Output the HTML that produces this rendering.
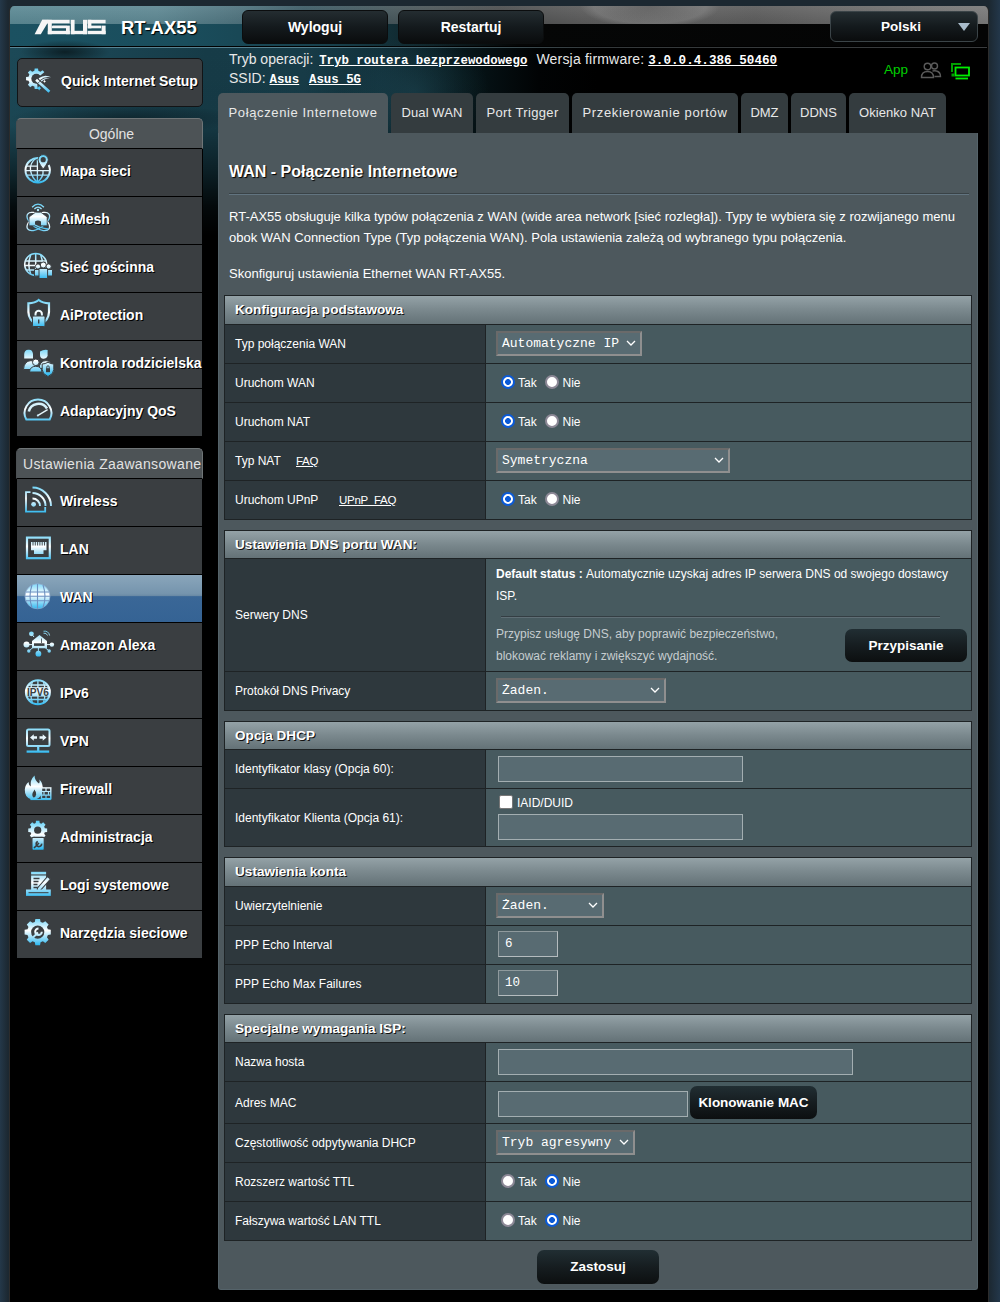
<!DOCTYPE html>
<html><head><meta charset="utf-8"><style>
*{box-sizing:border-box;}
html,body{margin:0;padding:0;}
body{width:1000px;height:1302px;overflow:hidden;background:linear-gradient(90deg,#243849 0px,#1c2831 8px,#1c2831 989px,#23374a 1000px);font-family:"Liberation Sans",sans-serif;position:relative;}
.abs{position:absolute;}
#main{position:absolute;left:9px;top:6px;width:980px;height:1296px;background:#000;border-radius:5px 5px 0 0;overflow:hidden;border-left:1px solid #2c2c2c;border-right:1px solid #2c2c2c;}
#hdrtop{position:absolute;left:0;top:0;width:980px;height:18px;background:linear-gradient(90deg,#5b8994 0%,#5e8893 15%,#4d717c 24%,#3b5a64 30%,#4a5558 42%,#4b4d4e 50%,#5a5a5a 58%,#626262 66%,#5c5c5c 76%,#6e6e6e 90%,#7a7a7a 100%);}
#hdrtop2{position:absolute;left:0;top:0;width:979px;height:18px;background:linear-gradient(180deg,rgba(255,255,255,0.08),rgba(0,0,0,0.05));}
#hdrmid{position:absolute;left:0;top:18px;width:979px;height:22px;background:linear-gradient(90deg,#1b5161 0%,#1a4d5c 18%,#173f4b 33%,#0e2227 43%,#050606 52%,#040404 100%);}
#hdrline{position:absolute;left:0;top:40px;width:977px;height:1px;background:#000;}
#hdrline2{position:absolute;left:0;top:41px;width:977px;height:1px;background:linear-gradient(90deg,#5a8696 0%,#54808f 30%,#3f5a63 45%,#34393b 60%,#3a3c3e 100%);}
#hdrbot{position:absolute;left:0;top:42px;width:979px;height:220px;background:linear-gradient(90deg,#1c4957 0%,#1a4452 10%,#163b47 20%,#173c48 30%,#11303a 38%,#07171b 46%,#010304 54%,#000 60%);}
#hdrbot2{position:absolute;left:0;top:42px;width:979px;height:220px;background:linear-gradient(180deg,rgba(0,0,0,0) 0%,rgba(0,0,0,0.05) 35%,rgba(0,0,0,0.45) 55%,rgba(0,0,0,0.85) 72%,#000 85%);}
#blob1{position:absolute;left:10px;top:34px;width:90px;height:24px;border-radius:50%;background:radial-gradient(ellipse at center,rgba(0,0,0,0.55),rgba(0,0,0,0) 70%);}
#blob2{position:absolute;left:0px;top:98px;width:230px;height:30px;border-radius:50%;background:radial-gradient(ellipse at center,rgba(0,0,0,0.4),rgba(0,0,0,0) 72%);}
#blob3{position:absolute;left:330px;top:30px;width:150px;height:110px;border-radius:50%;background:radial-gradient(ellipse at center,rgba(40,90,105,0.35),rgba(0,0,0,0) 70%);}
#blob4{position:absolute;left:570px;top:0px;width:140px;height:18px;background:radial-gradient(ellipse 70px 22px at 50% 0%,rgba(0,0,0,0.05) 0%,rgba(255,255,255,0.12) 80%,rgba(255,255,255,0) 100%);}
.btn{position:absolute;border-radius:6px;background:linear-gradient(180deg,#242d31 0%,#141a1d 50%,#0a0c0d 100%);color:#fff;font-weight:bold;text-align:center;border:1px solid #0b0d0e;}
.sb{position:absolute;left:17px;width:186px;}
.qis{top:58px;height:49px;background:#3a3e41;border:1px solid #121416;border-radius:5px;}
.sbt{position:absolute;left:43px;top:0;line-height:44px;color:#fff;font-weight:bold;font-size:14px;text-shadow:1px 1px 0 #000;white-space:nowrap;}
.grp{white-space:nowrap;overflow:hidden;height:31px;left:16px !important;width:187px !important;background:#4d5356;border-radius:5px 5px 0 0;border-top:1px solid #6f7577;border-right:1px solid #6f7577;border-left:1px solid #4a4f52;color:#e2e2e2;font-size:14px;line-height:30px;text-align:center;border-bottom:1px solid #000;}
.mi{position:absolute;left:17px;width:186px;height:48px;background:#3a3e41;border-bottom:1px solid #000;border-right:1px solid #000;}
.mi.on{background:linear-gradient(180deg,#8aa6bb 0%,#7594ad 40%,#6a8aa5 44%,#3a6797 46%,#356394 100%);}
.mi svg{position:absolute;left:7px;top:5px;}
.mi .t{position:absolute;left:43px;top:0;line-height:45px;color:#fff;font-weight:bold;font-size:14px;text-shadow:1px 1px 0 #000;white-space:nowrap;}
.info{position:absolute;color:#e8e8e8;font-size:14px;white-space:nowrap;}
.mono{font-family:"Liberation Mono",monospace;font-weight:bold;text-decoration:underline;color:#fff;font-size:12.4px;}
.tab{position:absolute;top:93px;height:41px;background:#343c3f;border-radius:5px 5px 0 0;color:#e8e8e8;font-size:13px;text-align:center;line-height:39px;white-space:nowrap;}
.tab.act{background:#4d585d;}
#panel{position:absolute;left:218px;top:133px;width:760px;height:1157px;background:#4d585d;border-radius:0 0 3px 3px;border-left:1px solid #55636a;border-right:1px solid #55636a;border-bottom:1px solid #55636a;}
.ttl{position:absolute;left:229px;top:163px;color:#fff;font-weight:bold;font-size:16px;text-shadow:1px 1px 1px #000;white-space:nowrap;}
.hr{position:absolute;left:229px;top:193px;width:740px;height:2px;border-top:1px solid #394246;border-bottom:1px solid #627480;}
.para{position:absolute;left:229px;color:#fff;font-size:13px;line-height:21px;white-space:nowrap;}
.tb{position:absolute;left:224px;width:748px;border:1px solid #1e2325;background:#475a5f;}
.th{position:relative;background:linear-gradient(180deg,#94a2a7 0%,#7a888d 50%,#647277 100%);border-bottom:1px solid #1e2325;color:#fff;font-weight:bold;font-size:13.6px;padding-left:10px;text-shadow:1px 1px 0 #111;white-space:nowrap;}
.r{position:relative;border-bottom:1px solid #1e2325;}
.r.last{border-bottom:none;}
.r .l{position:absolute;left:0;top:0;bottom:0;width:261px;background:#2e383d;border-right:1px solid #1e2325;color:#fff;font-size:12px;padding-left:10px;display:flex;align-items:center;white-space:nowrap;}
.r .v{position:absolute;left:261px;top:0;bottom:0;right:0;color:#fff;font-size:12px;}
.dd{position:absolute;height:25px;background:#586b72;border-top:2px solid #6a6a6a;border-left:2px solid #6a6a6a;border-bottom:2px solid #8f8f8f;border-right:2px solid #8f8f8f;color:#fff;font-family:"Liberation Mono",monospace;font-size:13px;line-height:21px;padding-left:4px;white-space:nowrap;}
.dd svg{position:absolute;top:7px;}
.inp{position:absolute;height:26px;background:#586b72;border:1px solid #a3aeb1;}
.inp2{position:absolute;height:26px;background:#586b72;border-top:1px solid #8f9a9d;border-left:1px solid #8f9a9d;border-bottom:1px solid #b5bcbf;border-right:1px solid #b5bcbf;color:#fff;font-family:"Liberation Mono",monospace;font-size:12.5px;font-weight:normal;line-height:24px;padding-left:6px;}
.rad{position:absolute;width:14px;height:14px;border-radius:50%;background:#fff;border:2px solid #8c8896;}
.rad.on{border:2px solid #0b5ad7;background:radial-gradient(circle at 50% 50%,#0b5ad7 0,#0b5ad7 2.6px,#fff 3.2px);}
.rl{position:absolute;color:#fff;font-size:12px;}
.dbtn{position:absolute;border-radius:7px;background:linear-gradient(180deg,#212e33 0%,#161d20 50%,#0c0f10 100%);color:#fff;font-weight:bold;text-align:center;font-size:13.5px;}
</style></head><body>
<div id="main"><div id="hdrtop"></div><div id="hdrtop2"></div><div id="hdrmid"></div><div id="hdrline"></div><div id="hdrline2"></div><div id="hdrbot"></div><div id="hdrbot2"></div><div id="blob1"></div><div id="blob2"></div><div id="blob3"></div><div id="blob4"></div></div>
<svg class="abs" style="left:0;top:0" width="120" height="40" viewBox="0 0 120 40"><g fill="#f6f6f6"><path d="M34.6,34.2 L40.8,34.2 L48.2,22 L48.2,19.8 L42.2,19.8Z"/><path d="M42.2,19.8 H69.6 V23.3 H42.2Z"/><path d="M47.8,19.8 H51.8 V34.2 H47.8Z"/><path d="M52.6,25.6 L66.4,25.6 L66.4,28.3 L51.8,28.3 L51.8,26.4Z"/><path d="M66,25.6 H69.8 V34.2 H66Z"/><path d="M47.8,30.8 H69.8 V34.2 H47.8Z"/><path d="M70.8,19.8 H74.6 V34.2 H70.8Z"/><path d="M83,19.8 H87.2 V34.2 H83Z"/><path d="M70.8,30.8 H87.2 V34.2 H70.8Z"/><path d="M87.8,19.8 H105.6 V23.3 H87.8Z"/><path d="M87.8,19.8 H91.4 V28.3 H87.8Z"/><path d="M87.8,25.6 L101.2,25.6 L101.2,28.3 L87.8,28.3Z"/><path d="M101.6,25.6 H105.6 V34.2 H101.6Z"/><path d="M87.8,30.8 H105.6 V34.2 H87.8Z"/></g></svg>
<div class="abs" style="left:121px;top:17px;color:#fff;font-weight:bold;font-size:18.4px;letter-spacing:0px;text-shadow:1px 1px 1px #000;">RT-AX55</div>
<div class="btn" style="left:242px;top:10px;width:146px;height:34px;line-height:32px;font-size:14px;">Wyloguj</div>
<div class="btn" style="left:398px;top:10px;width:146px;height:34px;line-height:32px;font-size:14px;">Restartuj</div>
<div class="btn" style="left:830px;top:11px;width:148px;height:31px;line-height:29px;font-size:13.5px;padding-right:6px;border:1px solid #3b4448;">Polski<svg class="abs" style="left:127px;top:11px" width="12" height="8" viewBox="0 0 12 8"><path d="M0,0 H12 L6,8Z" fill="#a9bccb"/></svg></div>
<div class="info" style="left:229px;top:51px;">Tryb operacji: <span class="mono" style="margin-left:2px">Tryb routera bezprzewodowego</span><span style="margin-left:9px;letter-spacing:0.2px">Wersja firmware:</span> <span class="mono" style="font-size:12.65px">3.0.0.4.386_50460</span></div>
<div class="info" style="left:229px;top:70px;">SSID: <span class="mono">Asus</span>&nbsp; <span class="mono" style="margin-left:2px">Asus_5G</span></div>
<div class="abs" style="left:884px;top:62px;color:#00d000;font-size:13.5px;">App</div>
<svg class="abs" style="left:920px;top:61px" width="22" height="18" viewBox="0 0 22 18"><g fill="none" stroke="#5a5a5a" stroke-width="1.4"><circle cx="7.5" cy="5.5" r="3.3"/><path d="M1.5,16.5 Q1.5,10.5 7.5,10.5 Q13.5,10.5 13.5,16.5Z"/><circle cx="14.5" cy="5" r="3"/><path d="M12.5,10 Q15,9.5 16.5,10 Q20.5,11 20.5,15.5 H14.5"/></g></svg>
<svg class="abs" style="left:950px;top:61px" width="22" height="20" viewBox="0 0 22 20"><path d="M2,11 V3 H11" fill="none" stroke="#00a000" stroke-width="2"/><rect x="5.5" y="6.5" width="13.5" height="8" fill="none" stroke="#00ee00" stroke-width="1.8"/><path d="M5.5,17.5 H18" stroke="#00ee00" stroke-width="1.8"/><rect x="1.5" y="12.5" width="3" height="3" fill="#00a000"/></svg>
<div class="sb qis"><svg width="0" height="0"></svg><div class="abs" style="left:8px;top:8px"><svg width="27" height="27" viewBox="0 0 30 30" overflow="visible"><defs><linearGradient id="igqis" gradientUnits="userSpaceOnUse" x1="0" y1="1" x2="0" y2="29"><stop offset="0" stop-color="#5ccff8"/><stop offset="0.48" stop-color="#ffffff"/><stop offset="1" stop-color="#2db8f0"/></linearGradient></defs><path d="M9.27,4.28 L9.65,1.55 L13.35,1.55 L13.73,4.28 L16.09,5.26 L18.29,3.60 L20.90,6.21 L19.24,8.41 L20.22,10.77 L22.95,11.15 L22.95,14.85 L20.22,15.23 L19.24,17.59 L20.90,19.79 L18.29,22.40 L16.09,20.74 L13.73,21.72 L13.35,24.45 L9.65,24.45 L9.27,21.72 L6.91,20.74 L4.71,22.40 L2.10,19.79 L3.76,17.59 L2.78,15.23 L0.05,14.85 L0.05,11.15 L2.78,10.77 L3.76,8.41 L2.10,6.21 L4.71,3.60 L6.91,5.26Z" fill="url(#igqis)"/><circle cx="11.5" cy="13" r="5.6" fill="#3a3e41"/>
<path d="M11.5,13 L22,4.5 L30,10 L30,30 L14,30Z" fill="#3a3e41"/>
<path d="M14,12.5 Q21,7.5 28,11.5 Q21,9.8 15.2,14.6Z" fill="url(#igqis)"/><path d="M16.2,15 Q21,11.5 26.5,12.5 Q21,12.8 17.2,16.5Z" fill="#cfe9f5"/>
<path d="M11.2,14.2 L26,27.6" stroke="#3a3e41" stroke-width="5"/><path d="M11.2,14.2 L26,27.6" stroke="url(#igqis)" stroke-width="3"/><path d="M13.2,18.2 L15.4,15.8" stroke="#3a3e41" stroke-width="0.9"/>
<path d="M14.6,21.200000000000003 Q15.32,22.880000000000003 17.0,23.6 Q15.32,24.32 14.6,26.0 Q13.879999999999999,24.32 12.2,23.6 Q13.879999999999999,22.880000000000003 14.6,21.200000000000003Z" fill="#4fc8f6"/><path d="M11.6,18.5 Q11.959999999999999,19.34 12.799999999999999,19.7 Q11.959999999999999,20.06 11.6,20.9 Q11.24,20.06 10.4,19.7 Q11.24,19.34 11.6,18.5Z" fill="#bfe8fa"/><path d="M20.6,14.5 Q21.05,15.55 22.1,16 Q21.05,16.45 20.6,17.5 Q20.150000000000002,16.45 19.1,16 Q20.150000000000002,15.55 20.6,14.5Z" fill="#ffffff"/></svg></div><div class="sbt">Quick Internet Setup</div></div>
<div class="sb grp" style="top:118px;padding-left:4px;">Ogólne</div>
<div class="mi" style="top:149px"><svg width="30" height="30" viewBox="0 0 30 30" overflow="visible"><defs><linearGradient id="igmap" gradientUnits="userSpaceOnUse" x1="0" y1="1" x2="0" y2="29"><stop offset="0" stop-color="#5ccff8"/><stop offset="0.48" stop-color="#ffffff"/><stop offset="1" stop-color="#2db8f0"/></linearGradient></defs><path d="M16.6,4.4 A12.2,12.2 0 1 0 24.7,11" fill="none" stroke="url(#igmap)" stroke-width="2"/>
<g fill="none" stroke="url(#igmap)" stroke-width="1.3"><path d="M2.5,12.2 H14 M1.6,16.7 H25.6 M2.5,21.2 H24.8 M13.4,5.5 V28.3 M12,4.3 Q5.5,9 6.5,16.5 Q8,24 13.4,28.3 M19,16 Q20,23 13.4,28.3"/></g>
<path d="M19.2,0.6 a5.1,5.1 0 0 1 5.1,5.1 c0,3.3 -5.1,9.2 -5.1,9.2 c0,0 -5.1,-5.9 -5.1,-9.2 a5.1,5.1 0 0 1 5.1,-5.1Z" fill="url(#igmap)" stroke="#3a3e41" stroke-width="1"/><circle cx="19.2" cy="5.7" r="2.6" fill="#3a3e41"/></svg><div class="t">Mapa sieci</div></div>
<div class="mi" style="top:197px"><svg width="30" height="30" viewBox="0 0 30 30" overflow="visible"><defs><linearGradient id="igaimesh" gradientUnits="userSpaceOnUse" x1="0" y1="1" x2="0" y2="29"><stop offset="0" stop-color="#5ccff8"/><stop offset="0.48" stop-color="#ffffff"/><stop offset="1" stop-color="#2db8f0"/></linearGradient></defs><g fill="none" stroke="url(#igaimesh)" stroke-width="1.3"><ellipse cx="14.3" cy="19.5" rx="13" ry="6.5" transform="rotate(-35 14.3 19.5)"/><ellipse cx="14.3" cy="19.5" rx="13" ry="6.5" transform="rotate(35 14.3 19.5)"/>
<path d="M8.1,5.2 Q14,-1 19.9,5.2 M10.4,7 Q14,3.2 17.6,7"/></g>
<path d="M5,15 L11.5,10.2 L16.8,10.2 L23.2,15 L23.2,23.8 L5,23.8Z" fill="url(#igaimesh)" stroke="#3a3e41" stroke-width="0.8"/><path d="M11,23.8 L11,19.5 Q14,17.5 17,19.5 L17,23.8Z" fill="#3a3e41"/><circle cx="14" cy="8" r="1.2" fill="url(#igaimesh)"/>
<path d="M11,23 Q16,26 24,27" fill="none" stroke="url(#igaimesh)" stroke-width="1.3"/></svg><div class="t">AiMesh</div></div>
<div class="mi" style="top:245px"><svg width="30" height="30" viewBox="0 0 30 30" overflow="visible"><defs><linearGradient id="igguest" gradientUnits="userSpaceOnUse" x1="0" y1="1" x2="0" y2="29"><stop offset="0" stop-color="#5ccff8"/><stop offset="0.48" stop-color="#ffffff"/><stop offset="1" stop-color="#2db8f0"/></linearGradient></defs><g fill="none" stroke="url(#igguest)" stroke-width="1.5"><circle cx="11.7" cy="14.5" r="11"/>
<path d="M1,11 H22.5 M1,15.5 H22.5 M2,20 H21 M11.7,3.5 V25.5 M6.7,5 Q3,14.5 6.7,24 M16.7,5 Q20.4,14.5 16.7,24"/></g>
<g stroke="#3a3e41" stroke-width="1"><circle cx="14" cy="16.5" r="2.6" fill="url(#igguest)"/><circle cx="24.6" cy="16.5" r="2.6" fill="url(#igguest)"/>
<path d="M10.5,19.5 h7 v6.5 h-7Z M21,19.5 h7.5 v6.5 h-7.5Z" fill="url(#igguest)"/>
<circle cx="19.3" cy="15" r="3" fill="url(#igguest)"/><path d="M15,18.5 h8.6 v10 h-8.6Z" fill="url(#igguest)"/></g></svg><div class="t">Sieć gościnna</div></div>
<div class="mi" style="top:293px"><svg width="30" height="30" viewBox="0 0 30 30" overflow="visible"><defs><linearGradient id="igprot" gradientUnits="userSpaceOnUse" x1="0" y1="1" x2="0" y2="29"><stop offset="0" stop-color="#5ccff8"/><stop offset="0.48" stop-color="#ffffff"/><stop offset="1" stop-color="#2db8f0"/></linearGradient></defs><path d="M14.7,2 Q18.5,5 25,5.3 V14 Q25,22.5 14.7,28.5 Q4.4,22.5 4.4,14 V5.3 Q11,5 14.7,2Z" fill="none" stroke="url(#igprot)" stroke-width="2.2"/>
<path d="M11.5,19 V16 a3.2,3.2 0 0 1 6.4,0 V19" fill="none" stroke="url(#igprot)" stroke-width="2"/><rect x="8.5" y="18" width="12.5" height="10.5" rx="1.2" fill="url(#igprot)" stroke="#3a3e41" stroke-width="1"/><rect x="14" y="21.5" width="1.4" height="4" fill="#3a3e41"/></svg><div class="t">AiProtection</div></div>
<div class="mi" style="top:341px"><svg width="30" height="30" viewBox="0 0 30 30" overflow="visible"><defs><linearGradient id="igparent" gradientUnits="userSpaceOnUse" x1="0" y1="1" x2="0" y2="29"><stop offset="0" stop-color="#5ccff8"/><stop offset="0.48" stop-color="#ffffff"/><stop offset="1" stop-color="#2db8f0"/></linearGradient></defs><path d="M4.2,3.8 Q8.5,3.2 9,8 V12.5 H0.2 V8 Q0.5,4 4.2,3.8Z" fill="url(#igparent)"/><path d="M16,5.5 Q20,3 23.6,4 V10 Q22.5,13 19.5,12.8 Q16,12.5 16,9Z" fill="url(#igparent)"/>
<path d="M-0.5,23.5 Q0,15 7,14.6 Q12.5,15 13,23.5Z" fill="url(#igparent)" stroke="#3a3e41" stroke-width="1"/>
<path d="M15,23 Q15.5,14.8 22,14.6 Q27,15 27.5,20Z" fill="url(#igparent)" stroke="#3a3e41" stroke-width="1"/>
<circle cx="11.8" cy="16.3" r="3.3" fill="url(#igparent)" stroke="#3a3e41" stroke-width="1"/><path d="M5.5,26 Q6,20.3 11.8,20.3 Q17.5,20.3 18,26Z" fill="url(#igparent)" stroke="#3a3e41" stroke-width="1"/>
<path d="M24,16.2 Q26.8,18 29.8,18 V23.5 Q29.8,28 24,30.5 Q18.2,28 18.2,23.5 V18 Q21.2,18 24,16.2Z" fill="url(#igparent)" stroke="#3a3e41" stroke-width="1"/><rect x="22" y="22.2" width="4" height="4" fill="#3a3e41"/><path d="M22.8,22.5 V21 a1.2,1.2 0 0 1 2.4,0 V22.5" fill="none" stroke="#3a3e41" stroke-width="0.9"/></svg><div class="t">Kontrola rodzicielska</div></div>
<div class="mi" style="top:389px"><svg width="30" height="30" viewBox="0 0 30 30" overflow="visible"><defs><linearGradient id="igqos" gradientUnits="userSpaceOnUse" x1="0" y1="1" x2="0" y2="29"><stop offset="0" stop-color="#5ccff8"/><stop offset="0.48" stop-color="#ffffff"/><stop offset="1" stop-color="#2db8f0"/></linearGradient></defs><path d="M2.3,25.5 A13.4,13.4 0 1 1 25.7,25.5 Z" fill="none" stroke="url(#igqos)" stroke-width="2"/><path d="M4.8,17.5 A10,10 0 0 1 23,14.5" fill="none" stroke="#d6f1fb" stroke-width="2.6"/>
<path d="M13.6,21.6 L23.6,15.6" stroke="#e6f6fc" stroke-width="1.4"/><circle cx="13.8" cy="21.4" r="1" fill="#bfe8fa"/></svg><div class="t">Adaptacyjny QoS</div></div>
<div class="sb grp" style="top:448px;text-align:left;padding-left:6px;letter-spacing:0.35px;">Ustawienia Zaawansowane</div>
<div class="mi" style="top:479px"><svg width="30" height="30" viewBox="0 0 30 30" overflow="visible"><defs><linearGradient id="igwifi" gradientUnits="userSpaceOnUse" x1="0" y1="1" x2="0" y2="29"><stop offset="0" stop-color="#5ccff8"/><stop offset="0.48" stop-color="#ffffff"/><stop offset="1" stop-color="#2db8f0"/></linearGradient></defs><path d="M6.5,8.2 H2 V27.6 H21.2 V23" fill="none" stroke="url(#igwifi)" stroke-width="1.8"/>
<circle cx="9.6" cy="20.3" r="2.4" fill="url(#igwifi)"/><g fill="none" stroke="url(#igwifi)" stroke-width="2"><path d="M8.5,14.5 A7.5,7.5 0 0 1 16,22"/><path d="M8.5,9 A13,13 0 0 1 21.5,22"/><path d="M8.5,3.5 A18.5,18.5 0 0 1 27,22"/></g></svg><div class="t">Wireless</div></div>
<div class="mi" style="top:527px"><svg width="30" height="30" viewBox="0 0 30 30" overflow="visible"><defs><linearGradient id="iglan" gradientUnits="userSpaceOnUse" x1="0" y1="1" x2="0" y2="29"><stop offset="0" stop-color="#5ccff8"/><stop offset="0.48" stop-color="#ffffff"/><stop offset="1" stop-color="#2db8f0"/></linearGradient></defs><rect x="3" y="5.6" width="22.8" height="20.6" fill="none" stroke="url(#iglan)" stroke-width="2.2"/>
<path d="M7,10 H22.5 V18.2 L19.5,18.2 V22 H10 V18.2 H7Z" fill="url(#iglan)"/><path d="M9,10 V13.5 M11.3,10 V13.5 M13.6,10 V13.5 M15.9,10 V13.5 M18.2,10 V13.5 M20.5,10 V13.5" stroke="#3a3e41" stroke-width="0.9"/></svg><div class="t">LAN</div></div>
<div class="mi on" style="top:575px"><svg width="30" height="30" viewBox="0 0 30 30" overflow="visible"><defs><linearGradient id="igwan" gradientUnits="userSpaceOnUse" x1="0" y1="1" x2="0" y2="29"><stop offset="0" stop-color="#5ccff8"/><stop offset="0.48" stop-color="#ffffff"/><stop offset="1" stop-color="#2db8f0"/></linearGradient></defs><circle cx="13.5" cy="16.3" r="12.5" fill="url(#igwan)" stroke="#90acd0" stroke-width="0.7"/><g fill="none" stroke="#6d90c0" stroke-width="1.1"><path d="M1.5,12 H25.5 M1,16.3 H26 M1.5,20.8 H25.5 M13.5,3.8 V28.8 M8,5 Q4,16.3 8,27.6 M19,5 Q23,16.3 19,27.6"/></g></svg><div class="t">WAN</div></div>
<div class="mi" style="top:623px"><svg width="30" height="30" viewBox="0 0 30 30" overflow="visible"><defs><linearGradient id="igalexa" gradientUnits="userSpaceOnUse" x1="0" y1="1" x2="0" y2="29"><stop offset="0" stop-color="#5ccff8"/><stop offset="0.48" stop-color="#ffffff"/><stop offset="1" stop-color="#2db8f0"/></linearGradient></defs><g stroke="url(#igalexa)" stroke-width="1"><path d="M2,16.6 H8 M21,16.6 H27.9 M14.4,20 V25.7 M4.8,23 L9,19.5 M25.2,23 L21,19.5 M7.4,5.8 L10,9"/></g>
<path d="M8,13 L15.5,6.9 L23,13 V20.3 H8Z" fill="url(#igalexa)"/><rect x="10" y="15.3" width="10.5" height="2.6" fill="#3a3e41"/><path d="M17.5,10.5 V15" stroke="#3a3e41" stroke-width="0.8"/>
<circle cx="2.5" cy="16.6" r="3" fill="url(#igalexa)"/><circle cx="27.9" cy="16.6" r="2.2" fill="url(#igalexa)"/><circle cx="14.4" cy="25.7" r="2.9" fill="url(#igalexa)"/><circle cx="4.8" cy="23" r="1.7" fill="url(#igalexa)"/><circle cx="25.2" cy="23" r="1.7" fill="url(#igalexa)"/><circle cx="7.4" cy="5.8" r="2.4" fill="url(#igalexa)"/>
<g fill="none" stroke="url(#igalexa)" stroke-width="0.9"><path d="M19.5,5.2 Q22.5,4.5 23.5,7.5 M19.5,3.2 Q24.5,2.5 25.6,7.5"/></g></svg><div class="t">Amazon Alexa</div></div>
<div class="mi" style="top:671px"><svg width="30" height="30" viewBox="0 0 30 30" overflow="visible"><defs><linearGradient id="igipv6" gradientUnits="userSpaceOnUse" x1="0" y1="1" x2="0" y2="29"><stop offset="0" stop-color="#5ccff8"/><stop offset="0.48" stop-color="#ffffff"/><stop offset="1" stop-color="#2db8f0"/></linearGradient></defs><circle cx="13.9" cy="16.2" r="12" fill="none" stroke="url(#igipv6)" stroke-width="2"/><g fill="none" stroke="url(#igipv6)" stroke-width="1.3"><path d="M4,9 H24 M4,23.5 H24 M13.9,4 V28.5 M8.5,5 Q5,16 8.5,27.5 M19.3,5 Q22.8,16 19.3,27.5"/></g>
<rect x="2" y="11.2" width="24" height="9.4" fill="url(#igipv6)"/><text x="13.9" y="20" text-anchor="middle" font-family="Liberation Sans" font-weight="bold" font-size="10" fill="#3a3e41" textLength="22" lengthAdjust="spacingAndGlyphs">IPV6</text></svg><div class="t">IPv6</div></div>
<div class="mi" style="top:719px"><svg width="30" height="30" viewBox="0 0 30 30" overflow="visible"><defs><linearGradient id="igvpn" gradientUnits="userSpaceOnUse" x1="0" y1="1" x2="0" y2="29"><stop offset="0" stop-color="#5ccff8"/><stop offset="0.48" stop-color="#ffffff"/><stop offset="1" stop-color="#2db8f0"/></linearGradient></defs><rect x="3" y="5.5" width="22.5" height="16.5" rx="1.5" fill="none" stroke="url(#igvpn)" stroke-width="2"/><path d="M14.2,22.5 V27 M2.6,27.6 H25.2" stroke="url(#igvpn)" stroke-width="2.2"/>
<path d="M6,13.5 L9.8,10.3 V12.3 H13 V14.7 H9.8 V16.7Z M22.5,13.5 L18.7,10.3 V12.3 H15.5 V14.7 H18.7 V16.7Z" fill="#e8f6fc"/></svg><div class="t">VPN</div></div>
<div class="mi" style="top:767px"><svg width="30" height="30" viewBox="0 0 30 30" overflow="visible"><defs><linearGradient id="igfire" gradientUnits="userSpaceOnUse" x1="0" y1="1" x2="0" y2="29"><stop offset="0" stop-color="#5ccff8"/><stop offset="0.48" stop-color="#ffffff"/><stop offset="1" stop-color="#2db8f0"/></linearGradient></defs><path d="M7.5,27.6 Q0.5,25.5 0.8,17.5 Q1.2,12.5 4.5,10 Q4.8,13.5 6.8,14.5 Q5.8,8 10.5,3.5 Q10.8,9 15,11.5 Q16,9.5 15.5,7.5 Q19.2,11.5 18.7,17.5 Q18.2,25.5 11.5,27.6Z" fill="url(#igfire)"/><path d="M9.5,25.5 Q7.5,23.5 8.8,20.5 Q10,19 10.3,17.5 Q12.5,20 12.2,22.5 Q11.8,25.2 9.5,25.5Z" fill="#3a3e41"/>
<rect x="17.5" y="15.9" width="9.3" height="10.8" fill="#3a3e41" stroke="url(#igfire)" stroke-width="1.4"/><path d="M17.5,19.5 H26.8 M17.5,23.1 H26.8 M22,15.9 V19.5 M20,19.5 V23.1 M24.5,19.5 V23.1 M22,23.1 V26.7" stroke="url(#igfire)" stroke-width="1.2"/><path d="M6.4,27.5 H26.8" stroke="url(#igfire)" stroke-width="1.2"/></svg><div class="t">Firewall</div></div>
<div class="mi" style="top:815px"><svg width="30" height="30" viewBox="0 0 30 30" overflow="visible"><defs><linearGradient id="igadmin" gradientUnits="userSpaceOnUse" x1="0" y1="1" x2="0" y2="29"><stop offset="0" stop-color="#5ccff8"/><stop offset="0.48" stop-color="#ffffff"/><stop offset="1" stop-color="#2db8f0"/></linearGradient></defs><path d="M20.82,8.19 L23.15,8.52 L23.15,11.88 L20.82,12.21 L20.16,13.82 L21.57,15.69 L19.19,18.07 L17.32,16.66 L15.71,17.32 L15.38,19.65 L12.02,19.65 L11.69,17.32 L10.08,16.66 L8.21,18.07 L5.83,15.69 L7.24,13.82 L6.58,12.21 L4.25,11.88 L4.25,8.52 L6.58,8.19 L7.24,6.58 L5.83,4.71 L8.21,2.33 L10.08,3.74 L11.69,3.08 L12.02,0.75 L15.38,0.75 L15.71,3.08 L17.32,3.74 L19.19,2.33 L21.57,4.71 L20.16,6.58Z" fill="url(#igadmin)"/><circle cx="13.7" cy="10.2" r="3.6" fill="#3a3e41"/>
<rect x="7.9" y="17.3" width="12.4" height="13" rx="1.2" fill="url(#igadmin)" stroke="#3a3e41" stroke-width="1.2"/><path d="M10,28 L15,23 M13.8,21.4 a2.7,2.7 0 1 0 3.8,2.2" fill="none" stroke="#3a3e41" stroke-width="1.6"/></svg><div class="t">Administracja</div></div>
<div class="mi" style="top:863px"><svg width="30" height="30" viewBox="0 0 30 30" overflow="visible"><defs><linearGradient id="iglogs" gradientUnits="userSpaceOnUse" x1="0" y1="1" x2="0" y2="29"><stop offset="0" stop-color="#5ccff8"/><stop offset="0.48" stop-color="#ffffff"/><stop offset="1" stop-color="#2db8f0"/></linearGradient></defs><rect x="7.1" y="3.8" width="15" height="2.6" fill="url(#iglogs)"/><path d="M7.1,7.5 H22.1 V22 H7.1Z" fill="url(#iglogs)"/>
<path d="M9.5,10.5 H15.5 M9.5,13.5 H14.5 M9.5,16.5 H13.5 M9.5,19.5 H16.5" stroke="#3a3e41" stroke-width="1.4"/><path d="M13.5,20 L23.5,8.5 L26.5,11 L16.5,22.3 L13,23.3Z" fill="url(#iglogs)" stroke="#3a3e41" stroke-width="1.1"/>
<path d="M2,21.5 H26.8 V27.9 H2Z" fill="url(#iglogs)"/><path d="M4.5,24.7 H24.5" stroke="#3a3e41" stroke-width="1"/></svg><div class="t">Logi systemowe</div></div>
<div class="mi" style="top:911px"><svg width="30" height="30" viewBox="0 0 30 30" overflow="visible"><defs><linearGradient id="igtools" gradientUnits="userSpaceOnUse" x1="0" y1="1" x2="0" y2="29"><stop offset="0" stop-color="#5ccff8"/><stop offset="0.48" stop-color="#ffffff"/><stop offset="1" stop-color="#2db8f0"/></linearGradient></defs><path d="M23.90,13.22 L26.79,13.77 L26.79,18.43 L23.90,18.98 L22.95,21.28 L24.61,23.71 L21.31,27.01 L18.88,25.35 L16.58,26.30 L16.03,29.19 L11.37,29.19 L10.82,26.30 L8.52,25.35 L6.09,27.01 L2.79,23.71 L4.45,21.28 L3.50,18.98 L0.61,18.43 L0.61,13.77 L3.50,13.22 L4.45,10.92 L2.79,8.49 L6.09,5.19 L8.52,6.85 L10.82,5.90 L11.37,3.01 L16.03,3.01 L16.58,5.90 L18.88,6.85 L21.31,5.19 L24.61,8.49 L22.95,10.92Z" fill="url(#igtools)"/><circle cx="13.7" cy="16.1" r="6.6" fill="#3a3e41"/>
<path d="M8.5,22 L14,16.5 M14.5,12.5 a3.3,3.3 0 1 0 3.3,3.3" fill="none" stroke="url(#igtools)" stroke-width="2"/></svg><div class="t">Narzędzia sieciowe</div></div>
<div class="tab act" style="left:218px;width:170px;letter-spacing:0.63px">Połączenie Internetowe</div>
<div class="tab" style="left:391px;width:82px;letter-spacing:0.1px">Dual WAN</div>
<div class="tab" style="left:476px;width:93px;letter-spacing:0.36px">Port Trigger</div>
<div class="tab" style="left:572px;width:166px;letter-spacing:0.64px">Przekierowanie portów</div>
<div class="tab" style="left:741px;width:47px;letter-spacing:0px">DMZ</div>
<div class="tab" style="left:791px;width:55px;letter-spacing:0px">DDNS</div>
<div class="tab" style="left:849px;width:97px;letter-spacing:0.05px">Okienko NAT</div>
<div id="panel"></div>
<div class="ttl">WAN - Połączenie Internetowe</div><div class="hr"></div>
<div class="para" style="top:206px">RT-AX55 obsługuje kilka typów połączenia z WAN (wide area network [sieć rozległa]). Typy te wybiera się z rozwijanego menu</div>
<div class="para" style="top:227px">obok WAN Connection Type (Typ połączenia WAN). Pola ustawienia zależą od wybranego typu połączenia.</div>
<div class="para" style="top:263px">Skonfiguruj ustawienia Ethernet WAN RT-AX55.</div>
<div class="tb" style="top:295px"><div class="th" style="height:29px;line-height:28px">Konfiguracja podstawowa</div><div class="r" style="height:39px"><div class="l">Typ połączenia WAN</div><div class="v"><div class="dd" style="left:10px;top:6px;width:146px">Automatyczne IP<svg style="left:128px" width="10" height="6" viewBox="0 0 10 6"><path d="M1 1 L5 5 L9 1" stroke="#fff" stroke-width="1.3" fill="none"/></svg></div></div></div><div class="r" style="height:39px"><div class="l">Uruchom WAN</div><div class="v"><div class="rad on" style="left:15px;top:11px"></div><div class="rl" style="left:32px;top:11.5px">Tak</div><div class="rad " style="left:59px;top:11px"></div><div class="rl" style="left:76.5px;top:11.5px">Nie</div></div></div><div class="r" style="height:39px"><div class="l">Uruchom NAT</div><div class="v"><div class="rad on" style="left:15px;top:11px"></div><div class="rl" style="left:32px;top:11.5px">Tak</div><div class="rad " style="left:59px;top:11px"></div><div class="rl" style="left:76.5px;top:11.5px">Nie</div></div></div><div class="r" style="height:39px"><div class="l">Typ NAT<span style="position:absolute;left:71px;top:13px;font-size:11.5px;letter-spacing:-0.3px;text-decoration:underline;color:#fff">FAQ</span></div><div class="v"><div class="dd" style="left:10px;top:6px;width:234px">Symetryczna<svg style="left:216px" width="10" height="6" viewBox="0 0 10 6"><path d="M1 1 L5 5 L9 1" stroke="#fff" stroke-width="1.3" fill="none"/></svg></div></div></div><div class="r last" style="height:38px"><div class="l">Uruchom UPnP<span style="position:absolute;left:114px;top:13px;font-size:11.5px;letter-spacing:-0.3px;text-decoration:underline;color:#fff">UPnP_FAQ</span></div><div class="v"><div class="rad on" style="left:15px;top:11px"></div><div class="rl" style="left:32px;top:11.5px">Tak</div><div class="rad " style="left:59px;top:11px"></div><div class="rl" style="left:76.5px;top:11.5px">Nie</div></div></div></div>
<div class="tb" style="top:530px"><div class="th" style="height:28px;line-height:27px">Ustawienia DNS portu WAN:</div><div class="r" style="height:113px"><div class="l">Serwery DNS</div><div class="v"><div class="abs" style="left:10px;top:4px;width:470px;line-height:22px;font-size:12px"><b>Default status : </b>Automatycznie uzyskaj adres IP serwera DNS od swojego dostawcy ISP.</div>
<div class="abs" style="left:15px;top:57px;width:439px;height:2px;border-top:1px solid #343e43;border-bottom:1px solid #5f6e75"></div>
<div class="abs" style="left:10px;top:64px;line-height:22px;font-size:12px;color:#c6cdd0;white-space:nowrap">Przypisz usługę DNS, aby poprawić bezpieczeństwo,<br>blokować reklamy i zwiększyć wydajność.</div>
<div class="dbtn" style="left:359px;top:70px;width:122px;height:33px;line-height:33px">Przypisanie</div></div></div><div class="r last" style="height:38px"><div class="l">Protokół DNS Privacy</div><div class="v"><div class="dd" style="left:10px;top:6px;width:170px">Żaden.<svg style="left:152px" width="10" height="6" viewBox="0 0 10 6"><path d="M1 1 L5 5 L9 1" stroke="#fff" stroke-width="1.3" fill="none"/></svg></div></div></div></div>
<div class="tb" style="top:721px"><div class="th" style="height:28px;line-height:27px">Opcja DHCP</div><div class="r" style="height:39px"><div class="l">Identyfikator klasy (Opcja 60):</div><div class="v"><div class="inp" style="left:12px;top:6px;width:245px"></div></div></div><div class="r last" style="height:57px"><div class="l">Identyfikator Klienta (Opcja 61):</div><div class="v"><div class="abs" style="left:13px;top:6px;width:14px;height:14px;background:#fff;border:1px solid #777;border-radius:2px"></div><div class="rl" style="left:31px;top:7px">IAID/DUID</div><div class="inp" style="left:12px;top:25px;width:245px"></div></div></div></div>
<div class="tb" style="top:857px"><div class="th" style="height:29px;line-height:28px">Ustawienia konta</div><div class="r" style="height:39px"><div class="l">Uwierzytelnienie</div><div class="v"><div class="dd" style="left:10px;top:6px;width:108px">Żaden.<svg style="left:90px" width="10" height="6" viewBox="0 0 10 6"><path d="M1 1 L5 5 L9 1" stroke="#fff" stroke-width="1.3" fill="none"/></svg></div></div></div><div class="r" style="height:39px"><div class="l">PPP Echo Interval</div><div class="v"><div class="inp2" style="left:12px;top:5px;width:60px">6</div></div></div><div class="r last" style="height:38px"><div class="l">PPP Echo Max Failures</div><div class="v"><div class="inp2" style="left:12px;top:5px;width:60px">10</div></div></div></div>
<div class="tb" style="top:1014px"><div class="th" style="height:28px;line-height:27px">Specjalne wymagania ISP:</div><div class="r" style="height:39px"><div class="l">Nazwa hosta</div><div class="v"><div class="inp" style="left:12px;top:6px;width:355px"></div></div></div><div class="r" style="height:42px"><div class="l">Adres MAC</div><div class="v"><div class="inp" style="left:12px;top:9px;width:190px"></div><div class="dbtn" style="left:204px;top:4px;width:127px;height:33px;line-height:33px">Klonowanie MAC</div></div></div><div class="r" style="height:39px"><div class="l">Częstotliwość odpytywania DHCP</div><div class="v"><div class="dd" style="left:10px;top:6px;width:139px">Tryb agresywny<svg style="left:121px" width="10" height="6" viewBox="0 0 10 6"><path d="M1 1 L5 5 L9 1" stroke="#fff" stroke-width="1.3" fill="none"/></svg></div></div></div><div class="r" style="height:39px"><div class="l">Rozszerz wartość TTL</div><div class="v"><div class="rad " style="left:15px;top:11px"></div><div class="rl" style="left:32px;top:11.5px">Tak</div><div class="rad on" style="left:59px;top:11px"></div><div class="rl" style="left:76.5px;top:11.5px">Nie</div></div></div><div class="r last" style="height:38px"><div class="l">Fałszywa wartość LAN TTL</div><div class="v"><div class="rad " style="left:15px;top:11px"></div><div class="rl" style="left:32px;top:11.5px">Tak</div><div class="rad on" style="left:59px;top:11px"></div><div class="rl" style="left:76.5px;top:11.5px">Nie</div></div></div></div>
<div class="dbtn" style="left:537px;top:1250px;width:122px;height:34px;line-height:34px">Zastosuj</div>
</body></html>
